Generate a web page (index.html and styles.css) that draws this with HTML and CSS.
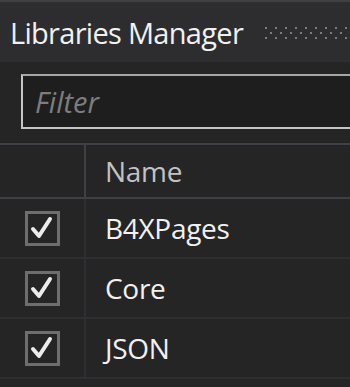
FILE: index.html
```html
<!DOCTYPE html>
<html lang="en">
<head>
    <meta charset="UTF-8">
    <meta name="viewport" content="width=device-width, initial-scale=1.0">
    <title>Libraries Manager</title>
    <link rel="stylesheet" href="styles.css">
</head>
<body>
<div class="panel">
    <div class="title-bar">
        <span class="title">Libraries Manager</span>
        <span class="grip"></span>
    </div>

    <div class="filter-row">
        <input class="filter" type="text" placeholder="Filter">
    </div>

    <div class="lib-table">
        <div class="row head">
            <div class="cell check-cell"></div>
            <div class="cell name-cell">Name</div>
        </div>
        <div class="row">
            <div class="cell check-cell">
                <span class="checkbox"><svg viewBox="0 0 29 29"><polyline points="5,15 11,22 22,5"/></svg></span>
            </div>
            <div class="cell name-cell">B4XPages</div>
        </div>
        <div class="row">
            <div class="cell check-cell">
                <span class="checkbox"><svg viewBox="0 0 29 29"><polyline points="5,15 11,22 22,5"/></svg></span>
            </div>
            <div class="cell name-cell">Core</div>
        </div>
        <div class="row">
            <div class="cell check-cell">
                <span class="checkbox"><svg viewBox="0 0 29 29"><polyline points="5,15 11,22 22,5"/></svg></span>
            </div>
            <div class="cell name-cell">JSON</div>
        </div>
    </div>
</div>
</body>
</html>
```

FILE: styles.css
```css
/* Libraries Manager panel, dark theme */
body {
    margin: 0;
    background-color: #252526;
    font-family: "Open Sans", "Noto Sans", sans-serif;
    overflow: hidden;
}
.panel {
    border-top: 2px solid #3f3f46;
}
.title-bar {
    display: flex;
    align-items: center;
    height: 60px;
    padding-left: 10px;
    background-color: #2d2d30;
}
.title {
    color: #f1f1f1;
    font-size: 29px;
    letter-spacing: -0.7px;
    white-space: nowrap;
}
.grip {
    flex: 1;
    height: 12px;
    margin-left: 22px;
    margin-top: 2px;
    background-image:
        conic-gradient(at 2px 2px, transparent 75%, #7c7c7c 0),
        conic-gradient(at 2px 2px, transparent 75%, #7c7c7c 0);
    background-size: 10px 10px;
    background-position: 0 0, 5px 5px;
}
.filter-row {
    padding: 12px 0 14px 21px;
}
.filter {
    display: block;
    box-sizing: border-box;
    width: 100%;
    height: 55px;
    margin: 0;
    padding: 0 12px;
    background-color: #1e1e1e;
    border: 2px solid #c4c4c4;
    border-top-color: #a6a6a6;
    border-right: none;
    border-radius: 0;
    outline: none;
    color: #f1f1f1;
    font-family: inherit;
    font-size: 29px;
}
.filter::placeholder {
    color: #7d7d7d;
    font-style: italic;
}
.lib-table {
    border-top: 2px solid #3f3f46;
}
.row {
    display: flex;
    height: 58px;
    border-bottom: 2px solid #2f2f33;
}
.row.head {
    height: 52px;
    border-bottom-color: #3f3f46;
}
.cell {
    display: flex;
    align-items: center;
}
.check-cell {
    width: 84px;
    flex-shrink: 0;
    justify-content: center;
    border-right: 2px solid #2f2f33;
}
.head .check-cell {
    border-right-color: #3f3f46;
}
.name-cell {
    padding-left: 19px;
    color: #f1f1f1;
    font-size: 28px;
    letter-spacing: -0.3px;
    white-space: nowrap;
}
.head .name-cell {
    color: #c2c2c2;
}
.checkbox {
    width: 29px;
    height: 29px;
    margin-left: 1px;
    margin-top: 1px;
    border: 3px solid #6e6e6e;
}
.checkbox svg {
    display: block;
    width: 29px;
    height: 29px;
}
.checkbox polyline {
    fill: none;
    stroke: #ececec;
    stroke-width: 4;
    stroke-linecap: round;
    stroke-linejoin: round;
}
```
